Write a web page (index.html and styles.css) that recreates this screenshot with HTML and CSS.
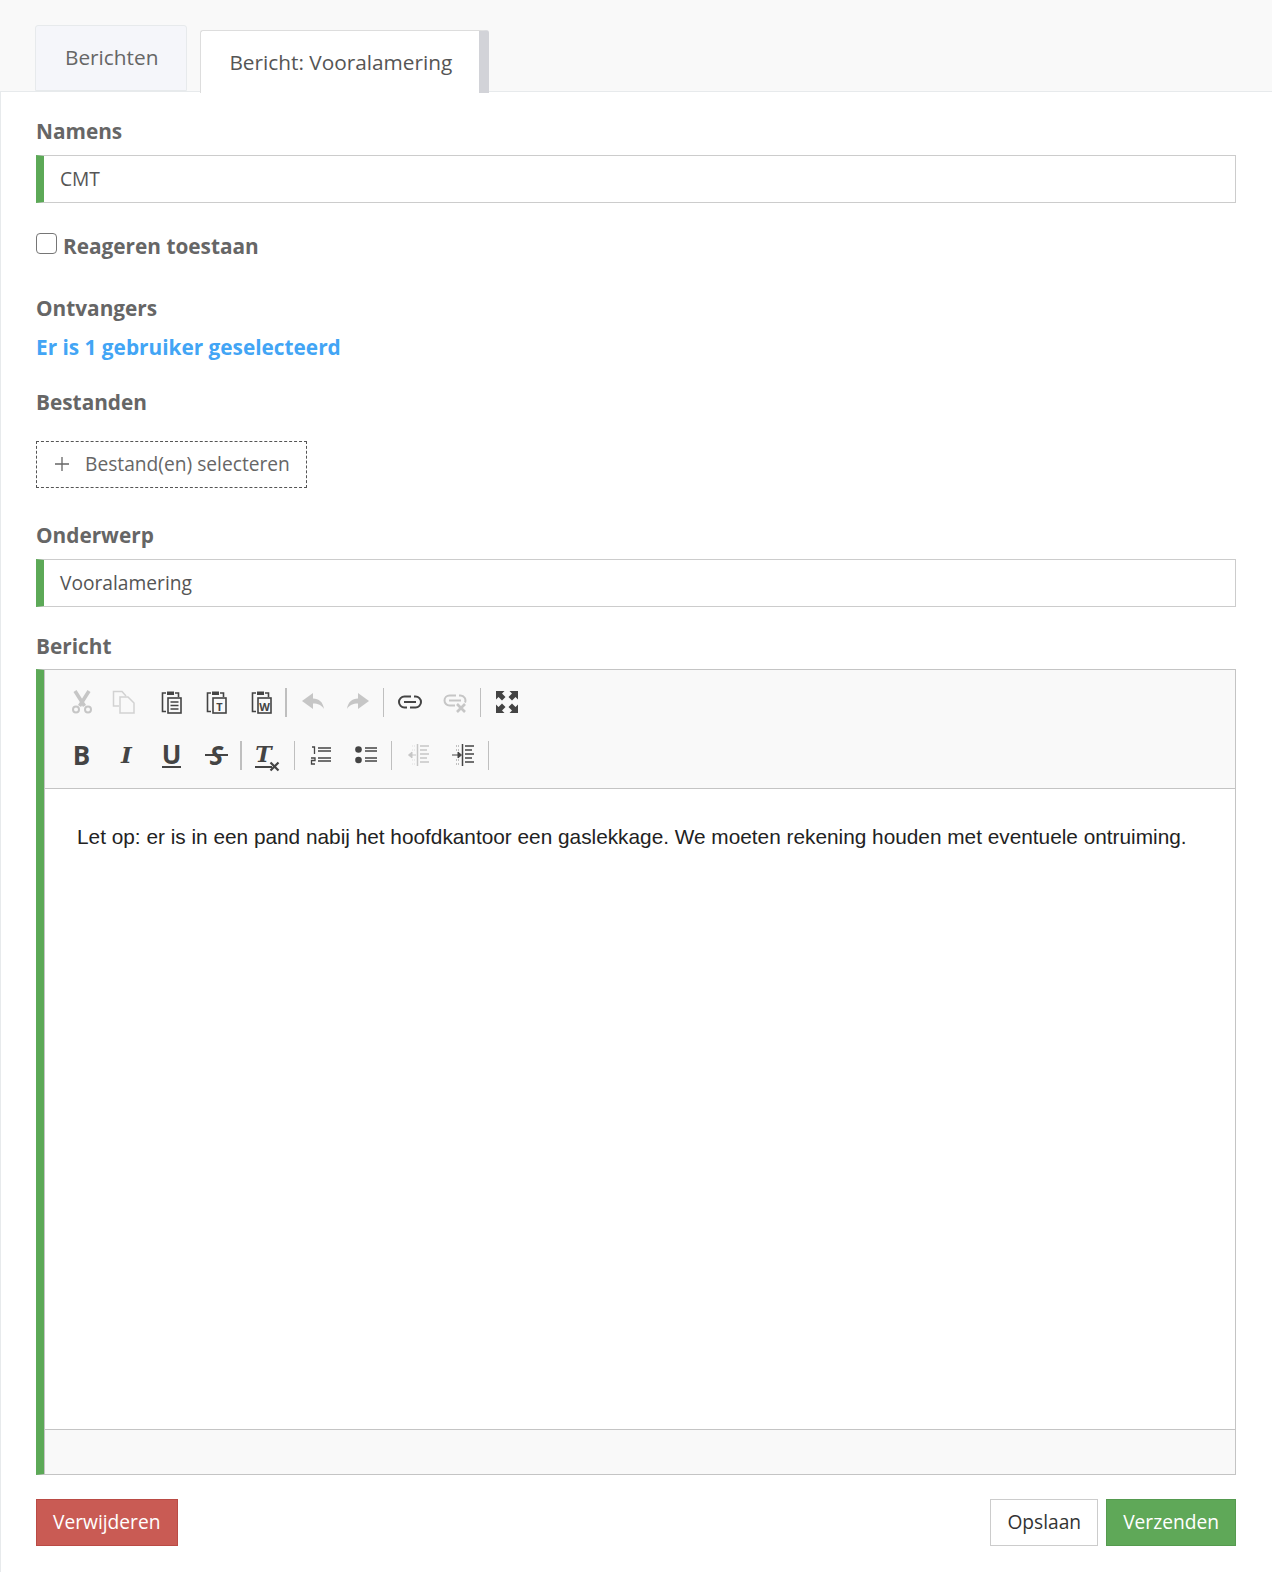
FILE: index.html
```html
<!DOCTYPE html>
<html lang="nl">

<head>
    <meta charset="UTF-8">
    <meta name="viewport" content="width=device-width, initial-scale=1.0">
    <title>Bericht: Vooralamering</title>
    <link rel="stylesheet" href="styles.css">
</head>

<body>
    <div class="tabs">
        <div class="tab">Berichten</div>
        <div class="tab tab-active">Bericht: Vooralamering</div>
    </div>

    <div class="panel">
        <label class="label">Namens</label>
        <div class="input">CMT</div>

        <div class="check-row">
            <span class="checkbox"></span>
            <span class="label">Reageren toestaan</span>
        </div>

        <label class="label gap-recipients">Ontvangers</label>
        <a class="recipients">Er is 1 gebruiker geselecteerd</a>

        <label class="label gap-files">Bestanden</label>
        <div class="upload">
            <svg class="upload-plus" width="16" height="16" viewBox="0 0 16 16"><path d="M8 1v14M1 8h14" stroke="#666" stroke-width="1.3" fill="none"/></svg>
            <span>Bestand(en) selecteren</span>
        </div>

        <label class="label gap-subject">Onderwerp</label>
        <div class="input">Vooralamering</div>

        <label class="label gap-message">Bericht</label>
        <div class="editor">
            <div class="toolbar">
                <div class="row">
                    <span class="tool"><svg width="24" height="24" viewBox="0 0 24 24"><g fill="none" stroke="#c6c6c6"><path d="M5 1l9.500 15M19 1L9.500 16" stroke-width="3.600"/><circle cx="6" cy="19.500" r="3" stroke-width="2"/><circle cx="18" cy="19.500" r="3" stroke-width="2"/></g></svg></span>
                    <span class="tool"><svg class="shift-left" width="24" height="24" viewBox="0 0 24 24"><g fill="none" stroke="#d2d2d2" stroke-width="1.500"><path d="M7 16H1.500V1.500H10l4 4.500"/><path d="M8 7h8l6 6v10H8z" fill="#f9f9f9"/></g></svg></span>
                    <span class="tool"><svg width="24" height="24" viewBox="0 0 24 24"><g fill="none" stroke="#444" stroke-width="1.600"><path d="M6 3H2.500v18.500H6"/><path d="M15 3h3.500v4"/><rect x="8" y="8" width="13" height="15" fill="#f9f9f9"/><path d="M10.500 12h8M10.500 15.500h8M10.500 19h8"/></g><path d="M7 1.500h7V5H7z" fill="#444"/></svg></span>
                    <span class="tool"><svg width="24" height="24" viewBox="0 0 24 24"><g fill="none" stroke="#444" stroke-width="1.600"><path d="M6 3H2.500v18.500H6"/><path d="M15 3h3.500v4"/><rect x="8" y="8" width="13" height="15" fill="#f9f9f9"/></g><path d="M7 1.500h7V5H7z" fill="#444"/><text x="14.500" y="20.500" class="svg-letter">T</text></svg></span>
                    <span class="tool"><svg width="24" height="24" viewBox="0 0 24 24"><g fill="none" stroke="#444" stroke-width="1.600"><path d="M6 3H2.500v18.500H6"/><path d="M15 3h3.500v4"/><rect x="8" y="8" width="13" height="15" fill="#f9f9f9"/></g><path d="M7 1.500h7V5H7z" fill="#444"/><text x="14.500" y="20.500" class="svg-letter">W</text></svg></span>
                    <span class="sep sep-first"></span>
                    <span class="tool"><svg width="24" height="24" viewBox="0 0 24 24"><path d="M12 3v5.500c6 0 10 3.500 11 10.500-2.500-4-6-5.500-11-5.500V19L1 11z" fill="#c6c6c6"/></svg></span>
                    <span class="tool"><svg width="24" height="24" viewBox="0 0 24 24"><path d="M12 3v5.500C6 8.500 2 12 1 19c2.500-4 6-5.500 11-5.500V19l11-8z" fill="#c6c6c6"/></svg></span>
                    <span class="sep"></span>
                    <span class="tool"><svg width="24" height="24" viewBox="0 0 24 24"><g fill="none" stroke="#444" stroke-width="2"><path d="M13 6.500H6.500a5.500 5.500 0 0 0 0 11H9"/><path d="M12 17.500h5.500a5.500 5.500 0 0 0 0-11H16"/><path d="M6 12h12"/></g></svg></span>
                    <span class="tool"><svg width="24" height="24" viewBox="0 0 24 24"><g fill="none" stroke="#c6c6c6" stroke-width="2"><path d="M13 5.500H6.500a5 5 0 0 0 0 10H12"/><path d="M16 5.500h1.500a5 5 0 0 1 4.500 7"/><path d="M6 10.500h12"/></g><path d="M14 14l8 8M22 14l-8 8" stroke="#c6c6c6" stroke-width="2.600"/></svg></span>
                    <span class="sep"></span>
                    <span class="tool"><svg width="24" height="24" viewBox="0 0 24 24"><g fill="#444"><path d="M1 1h8.500L7 3.500 10.500 7 7 10.500 3.500 7 1 9.500z"/><path d="M23 1h-8.500L17 3.500 13.500 7 17 10.500 20.500 7 23 9.500z"/><path d="M1 23h8.500L7 20.500l3.500-3.500L7 13.500 3.500 17 1 14.500z"/><path d="M23 23h-8.500l2.500-2.500-3.500-3.500 3.500-3.500 3.500 3.500 2.500-2.500z"/></g></svg></span>
                </div>
                <div class="row row-format">
                    <span class="tool"><span class="glyph glyph-bold">B</span></span>
                    <span class="tool"><span class="glyph glyph-italic">I</span></span>
                    <span class="tool"><span class="glyph glyph-under">U</span></span>
                    <span class="tool"><span class="glyph glyph-strike">S</span></span>
                    <span class="sep sep-tight"></span>
                    <span class="tool"><span class="glyph glyph-clear">T<svg class="clear-x" width="11" height="11" viewBox="0 0 11 11"><path d="M1.500 1.500l8 8M9.500 1.500l-8 8" stroke="#444" stroke-width="2.200"/></svg></span></span>
                    <span class="sep sep-wide"></span>
                    <span class="tool"><svg width="24" height="24" viewBox="0 0 24 24"><path d="M9 5h13M9 8h13M9 15h13M9 18h13" stroke="#444" stroke-width="1.700" fill="none"/><path d="M3 4h2.500v7M2 15h4v2.500H2.500V21H6" stroke="#444" stroke-width="1.300" fill="none"/></svg></span>
                    <span class="tool"><svg width="24" height="24" viewBox="0 0 24 24"><path d="M11 5h12M11 8h12M11 15h12M11 18h12" stroke="#444" stroke-width="1.700" fill="none"/><circle cx="4.500" cy="6.500" r="3.300" fill="#444"/><circle cx="4.500" cy="17" r="3.300" fill="#444"/></svg></span>
                    <span class="sep"></span>
                    <span class="tool"><svg width="24" height="24" viewBox="0 0 24 24"><path d="M11.500 1v22" stroke="#c6c6c6" stroke-width="1.500"/><path d="M14 3h9M14 7h7M14 11h9M14 15h7M14 19h9" stroke="#c6c6c6" stroke-width="1.300"/><path d="M10 12H3M6 9l-3.500 3L6 15z" fill="#c6c6c6" stroke="#c6c6c6"/><path d="M6 3h3M6 7h3M6 17h3M6 21h3" stroke="#ddd" stroke-dasharray="1 1"/></svg></span>
                    <span class="tool"><svg width="24" height="24" viewBox="0 0 24 24"><path d="M11.500 1v22" stroke="#444" stroke-width="1.500"/><path d="M14 3h9M14 7h7M14 11h9M14 15h7M14 19h9" stroke="#444" stroke-width="1.300"/><path d="M1 12h6M7 9l3.500 3L7 15z" fill="#444" stroke="#444"/><path d="M5 3h3M5 7h3M5 17h3M5 21h3" stroke="#888" stroke-dasharray="1 1"/></svg></span>
                    <span class="sep"></span>
                </div>
            </div>
            <div class="editor-body">Let op: er is in een pand nabij het hoofdkantoor een gaslekkage. We moeten rekening houden met eventuele ontruiming.</div>
            <div class="editor-foot"></div>
        </div>

        <div class="actions">
            <button class="btn btn-red">Verwijderen</button>
            <div class="actions-right">
                <button class="btn">Opslaan</button>
                <button class="btn btn-green">Verzenden</button>
            </div>
        </div>
    </div>
</body>

</html>
```

FILE: styles.css
```css
* {
    box-sizing: border-box;
}

body {
    margin: 0;
    background: #f9f9f9;
    font-family: "Open Sans", sans-serif;
    font-size: 19.2px;
    color: #555;
}

/* tabs */
.tabs {
    display: flex;
    align-items: flex-end;
    height: 91px;
    padding-left: 35px;
    font-size: 20.8px;
}
.tab {
    height: 66px;
    padding: 16px 28px 0 29px;
    line-height: 30px;
    color: #666;
    background: #f5f6fa;
    border: 1px solid #e7eaec;
    border-radius: 3px 3px 0 0;
}
.tab-active {
    position: relative;
    height: 63px;
    margin: 0 0 -2px 13px;
    padding: 16px 27px 0 28px;
    color: #555;
    background: #fff;
    border-color: #ddd;
    border-right: 10px solid #d2d3d8;
    border-bottom: 0;
}

/* form */
.panel {
    height: 1481px;
    padding: 25px 36px 0 35px;
    background: #fff;
    border: 1px solid #e7eaec;
    border-width: 1px 0 0 1px;
}
.label {
    display: block;
    margin-bottom: 10px;
    font-size: 20.8px;
    font-weight: 700;
    line-height: 28px;
    color: #666;
}
.input {
    height: 48px;
    padding-left: 16px;
    line-height: 46px;
    background: #fff;
    border: 1px solid #ccc;
    border-left: 8px solid #5ca957;
}
.check-row {
    display: flex;
    gap: 6px;
    height: 28px;
    margin-top: 29px;
}
.check-row .label {
    margin: 0;
}
.checkbox {
    width: 21px;
    height: 21px;
    margin-top: 1px;
    background: #fff;
    border: 1px solid #767676;
    border-radius: 4px;
}
.gap-recipients {
    margin-top: 34px;
    margin-bottom: 11px;
}
.recipients {
    display: block;
    font-size: 20.8px;
    font-weight: 700;
    line-height: 28px;
    color: #42a5f5;
}
.gap-files {
    margin-top: 27px;
    margin-bottom: 25px;
}
.upload {
    display: flex;
    align-items: center;
    gap: 15px;
    width: 271px;
    height: 47px;
    padding: 0 0 2px 17px;
    color: #666;
    border: 1px dashed #555;
}
.gap-subject {
    margin-top: 33px;
}
.gap-message {
    margin-top: 25px;
    margin-bottom: 9px;
}

/* editor */
.editor {
    height: 806px;
    background: #fff;
    border: 1px solid #c4c4c4;
    border-left: 8px solid #5ca957;
}
.toolbar {
    height: 119px;
    padding: 10px 0 0 14px;
    background: #f9f9f9;
    border-left: 1px solid #c4c4c4;
    border-bottom: 1px solid #c4c4c4;
}
.row {
    display: flex;
    align-items: center;
    height: 44px;
}
.row-format {
    margin-top: 9px;
}
.tool {
    display: flex;
    align-items: center;
    justify-content: center;
    width: 45px;
    height: 44px;
}
.shift-left {
    margin-left: -5px;
}
.sep {
    width: 1px;
    height: 29px;
    margin: 0 3px;
    background: #bfbfbf;
}
.sep-first {
    width: 2px;
    margin: 0 3px 0 1px;
}
.sep-tight {
    width: 2px;
    margin: 0 1px;
}
.sep-wide {
    margin-left: 6px;
}
.svg-letter {
    font-family: "Open Sans", sans-serif;
    font-size: 11px;
    font-weight: 700;
    fill: #444;
    text-anchor: middle;
}
.glyph {
    position: relative;
    font-size: 26px;
    line-height: 30px;
    color: #444;
}
.glyph-bold {
    font-weight: 700;
}
.glyph-italic {
    font-family: "DejaVu Serif", serif;
    font-size: 23px;
    font-style: italic;
    font-weight: 700;
}
.glyph-under {
    font-weight: 700;
    border-bottom: 2px solid #444;
    line-height: 24px;
}
.glyph-strike {
    font-style: italic;
    font-weight: 700;
}
.glyph-strike::after {
    content: "";
    position: absolute;
    top: 14px;
    left: -5px;
    right: -5px;
    height: 2px;
    background: #444;
}
.glyph-clear {
    left: -2px;
    font-family: "DejaVu Serif", serif;
    font-size: 22px;
    font-style: italic;
    font-weight: 700;
    border-bottom: 2px solid #444;
    line-height: 24px;
}
.clear-x {
    position: absolute;
    left: 14px;
    bottom: -6px;
}
.editor-body {
    height: 640px;
    padding: 33px 0 0 32px;
    font-family: "Liberation Sans", Arial, sans-serif;
    font-size: 20.8px;
    line-height: 30px;
    color: #222;
    border-left: 1px solid #c4c4c4;
}
.editor-foot {
    height: 45px;
    background: #f9f9f9;
    border-top: 1px solid #c4c4c4;
    border-left: 1px solid #c4c4c4;
}

/* buttons */
.actions {
    display: flex;
    justify-content: space-between;
    margin-top: 24px;
}
.actions-right {
    display: flex;
    gap: 8px;
}
.btn {
    height: 47px;
    padding: 0 16px 2px;
    font-family: inherit;
    font-size: 19.2px;
    color: #333;
    background: #fff;
    border: 1px solid #ccc;
}
.btn-red {
    color: #fff;
    background: #c95b54;
    border-color: #ba4b45;
}
.btn-green {
    color: #fff;
    background: #5fa858;
    border-color: #559a4f;
}
```
